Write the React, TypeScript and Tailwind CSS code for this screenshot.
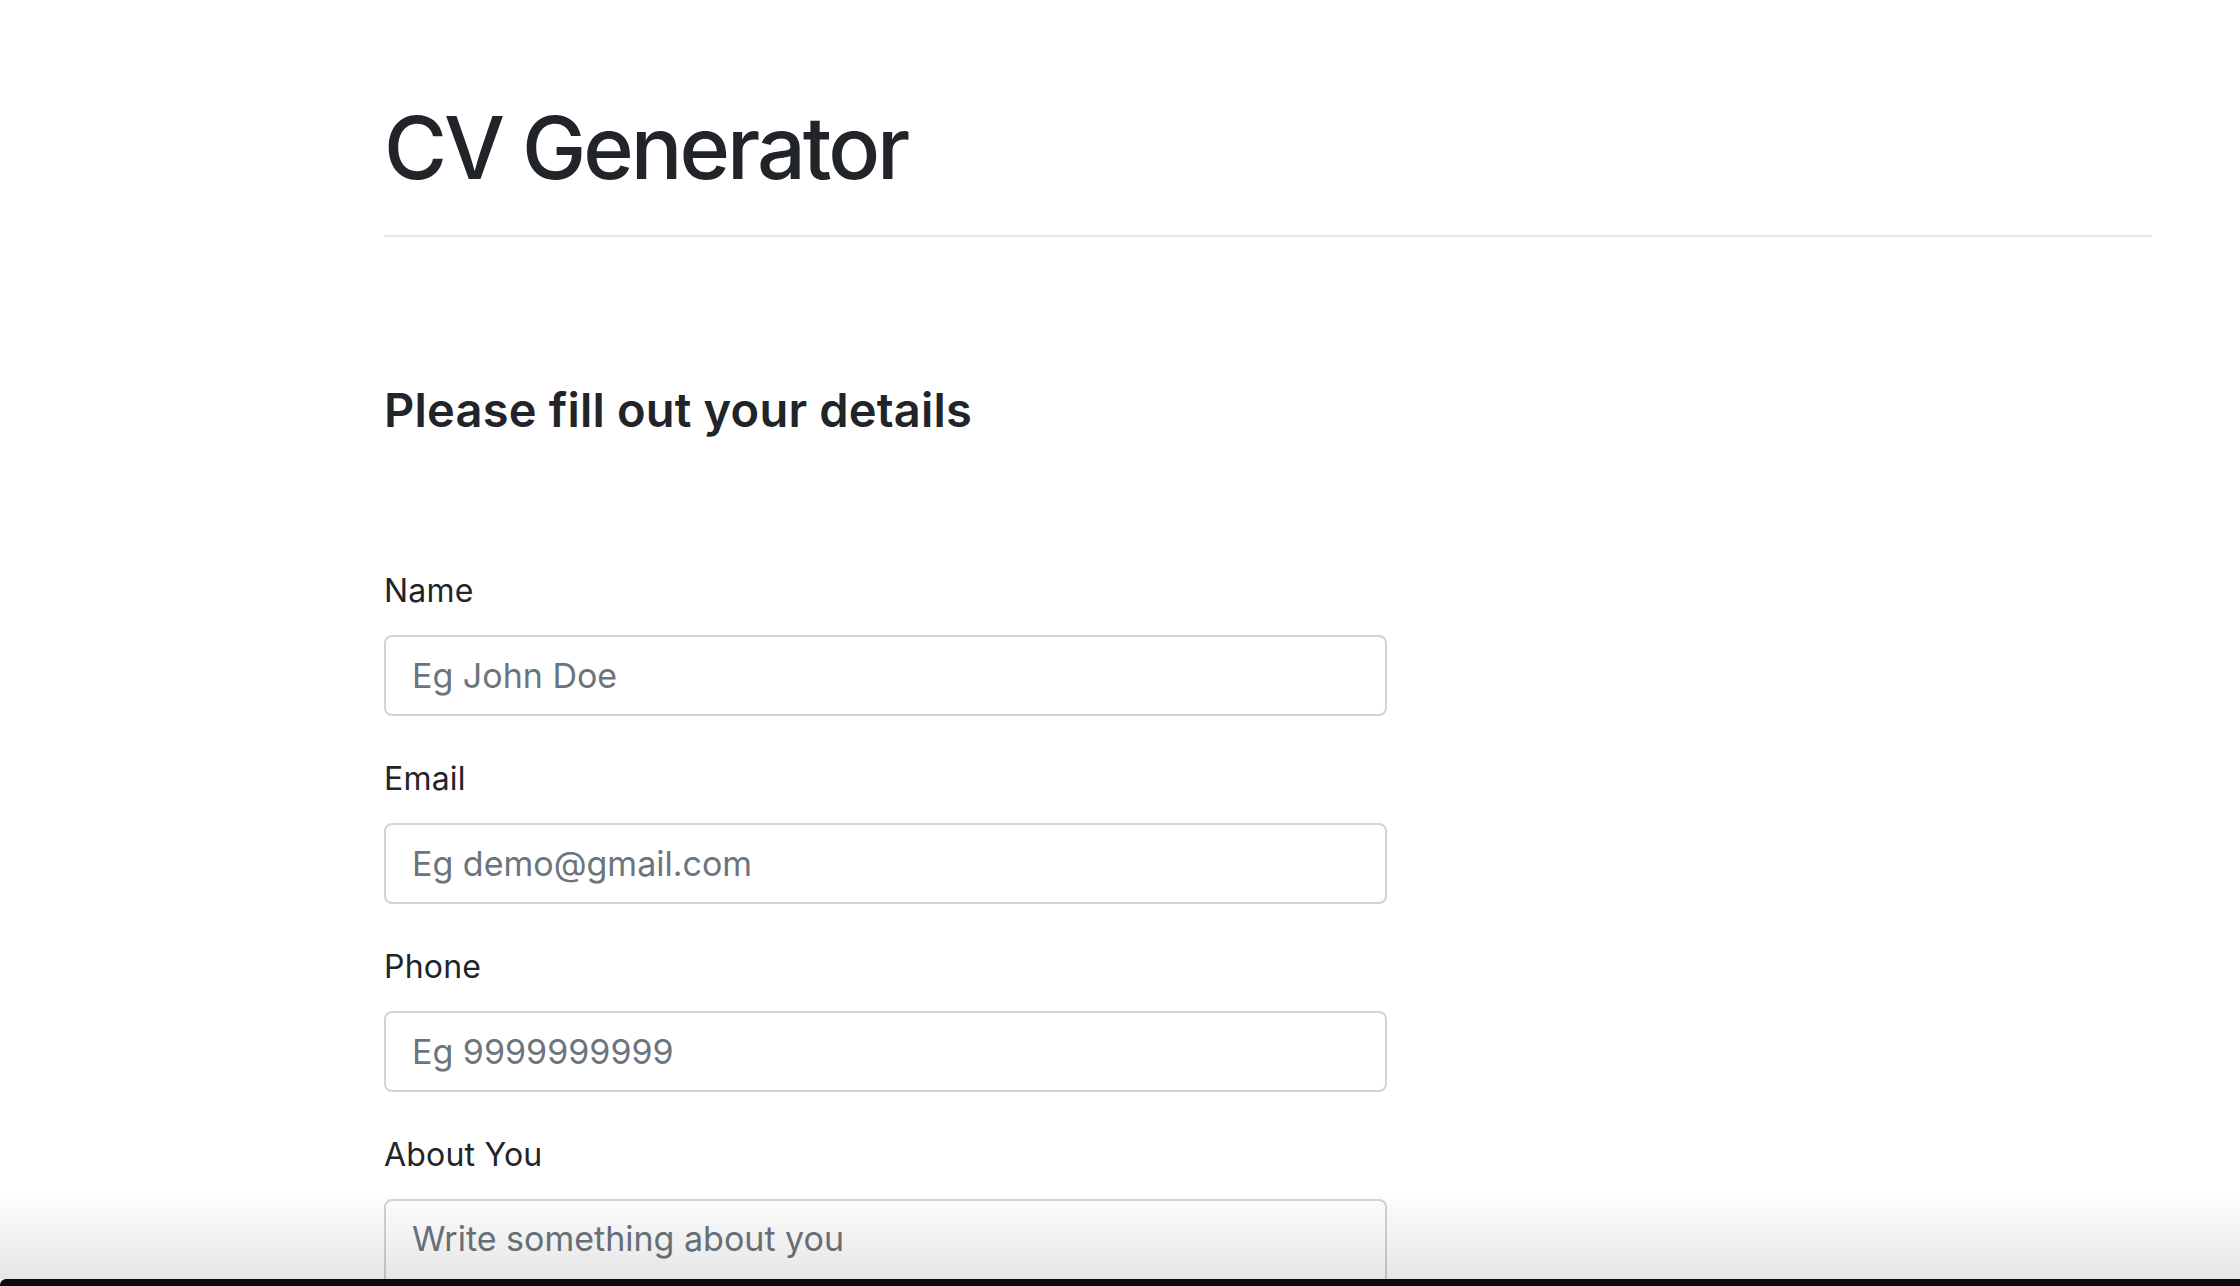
import React from 'react';

const fields = [
    { label: 'Name', placeholder: 'Eg John Doe' },
    { label: 'Email', placeholder: 'Eg demo@gmail.com' },
    { label: 'Phone', placeholder: 'Eg 9999999999' },
];

export default function App() {
    return (
        <div className="relative h-screen overflow-hidden bg-white text-[#212529] font-['Inter',sans-serif]">
            <div className="pl-[384px] pr-[88px] pt-[104px]">
                <h1 className="text-[86px] leading-[88px] font-medium tracking-[-3px]">CV Generator</h1>
                <hr className="mt-[43px] border-0 h-[2px] bg-[#e5e5e5]" />

                <h2 className="mt-[149px] text-[47px] leading-[47px] font-semibold tracking-[0.2px]">
                    Please fill out your details
                </h2>

                <form className="mt-[140px] w-[1003px] flex flex-col">
                    {fields.map((f) => (
                        <div key={f.label} className="flex flex-col mb-[45px]">
                            <label className="text-[32px] leading-[36px] tracking-[0.2px]">{f.label}</label>
                            <input
                                type="text"
                                placeholder={f.placeholder}
                                className="mt-[26px] h-[81px] px-[26px] text-[34px] border-2 border-[#ced4da] rounded-[8px] placeholder:text-[#6c757d] outline-none"
                            />
                        </div>
                    ))}
                    <div className="flex flex-col">
                        <label className="text-[32px] leading-[36px] tracking-[0.2px]">About You</label>
                        <textarea
                            placeholder="Write something about you"
                            className="mt-[26px] h-[200px] px-[26px] pt-[12px] text-[34px] leading-[51px] border-2 border-[#ced4da] rounded-[8px] placeholder:text-[#6c757d] outline-none resize-none"
                        />
                    </div>
                </form>
            </div>

            {/* screen edge shading over the page */}
            <div className="absolute left-0 right-0 bottom-[7px] h-[90px] bg-gradient-to-b from-transparent to-black/10 pointer-events-none" />
            <div className="absolute left-0 right-0 bottom-0 h-[7px] bg-[#0c0c0c] rounded-tl-[6px]" />
        </div>
    );
}
